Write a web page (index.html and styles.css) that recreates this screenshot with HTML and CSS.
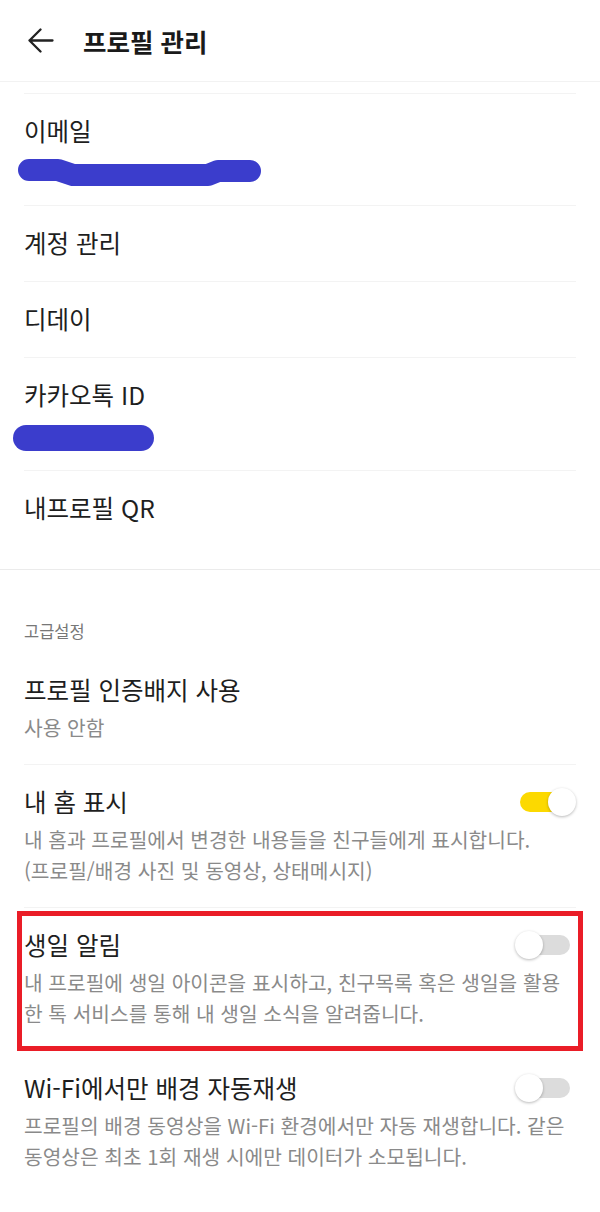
FILE: index.html
```html
<!DOCTYPE html>
<html lang="ko">
<head>
  <meta charset="utf-8">
  <title>프로필 관리</title>
  <link rel="stylesheet" href="styles.css">
</head>
<body>
  <header class="topbar">
    <svg class="back" width="26" height="26" viewBox="0 0 26 26">
      <path d="M1.5 12.5 H24.5 M12.5 1.5 L1.5 12.5 L12.5 23.5" fill="none" stroke="#222" stroke-width="2.3" stroke-linecap="round" stroke-linejoin="round"/>
    </svg>
    <h1 class="title">프로필 관리</h1>
  </header>

  <section class="group">
    <div class="row stub"></div>

    <div class="row">
      <div class="label">이메일</div>
      <svg class="redact email" width="262" height="30" viewBox="0 0 262 30">
        <polyline points="11,12 40,12 55,17 190,17 200,13 232,13" fill="none" stroke="#3b3dcc" stroke-width="22" stroke-linecap="round" stroke-linejoin="round"/>
      </svg>
    </div>

    <div class="row">
      <div class="label">계정 관리</div>
    </div>

    <div class="row">
      <div class="label">디데이</div>
    </div>

    <div class="row">
      <div class="label">카카오톡 ID</div>
      <svg class="redact kakao" width="142" height="26" viewBox="0 0 142 26">
        <line x1="13" y1="13" x2="128" y2="13" stroke="#3b3dcc" stroke-width="26" stroke-linecap="round"/>
      </svg>
    </div>

    <div class="row last">
      <div class="label">내프로필 QR</div>
    </div>
  </section>

  <section class="group advanced">
    <div class="group-title">고급설정</div>

    <div class="row has-sub">
      <div class="label">프로필 인증배지 사용</div>
      <div class="sub">사용 안함</div>
    </div>

    <div class="row has-sub">
      <div class="row-head">
        <div class="label">내 홈 표시</div>
        <div class="switch on"><span class="knob"></span></div>
      </div>
      <div class="sub">내 홈과 프로필에서 변경한 내용들을 친구들에게 표시합니다.<br>(프로필/배경 사진 및 동영상, 상태메시지)</div>
    </div>

    <div class="row has-sub marked">
      <div class="row-head">
        <div class="label">생일 알림</div>
        <div class="switch"><span class="knob"></span></div>
      </div>
      <div class="sub">내 프로필에 생일 아이콘을 표시하고, 친구목록 혹은 생일을 활용 한 톡 서비스를 통해 내 생일 소식을 알려줍니다.</div>
    </div>

    <div class="row has-sub last">
      <div class="row-head">
        <div class="label">Wi-Fi에서만 배경 자동재생</div>
        <div class="switch"><span class="knob"></span></div>
      </div>
      <div class="sub">프로필의 배경 동영상을 Wi-Fi 환경에서만 자동 재생합니다. 같은 동영상은 최초 1회 재생 시에만 데이터가 소모됩니다.</div>
    </div>
  </section>
</body>
</html>
```

FILE: styles.css
```css
body {
  margin: 0;
  background: #fff;
  font-family: "Noto Sans CJK KR", "Noto Sans", sans-serif;
  color: #1e1e1e;
}

.topbar {
  height: 81px;
  display: flex;
  align-items: center;
  border-bottom: 1px solid #f2f2f2;
}

.back {
  display: block;
  margin-left: 28px;
}

.title {
  margin: 0 0 0 29px;
  font-size: 25.5px;
  font-weight: 700;
  line-height: 30px;
  color: #1a1a1a;
}

.row {
  margin: 0 24px;
  padding: 22px 0 23px;
  border-bottom: 1px solid #f3f3f3;
}

.row.stub {
  padding: 0;
  height: 11px;
}

.row.has-sub {
  padding-bottom: 21px;
}

.row.last {
  border-bottom: none;
}

.label {
  font-size: 24.5px;
  line-height: 30px;
  color: #1e1e1e;
}

.sub {
  margin-top: 7px;
  font-size: 20.3px;
  line-height: 31px;
  color: #8a8a8a;
  word-break: keep-all;
}

.redact {
  display: block;
}

.redact.email {
  margin: 12px 0 -6px -6px;
}

.redact.kakao {
  margin: 15px 0 -4px -11px;
}

.group:first-of-type {
  border-bottom: 1px solid #ebebeb;
  padding-bottom: 23px;
}

.group-title {
  margin: 51px 0 12px 24px;
  font-size: 16.5px;
  line-height: 20px;
  color: #777;
}

.row-head {
  display: flex;
  align-items: center;
  justify-content: space-between;
  padding-right: 6px;
}

.switch {
  position: relative;
  width: 50px;
  height: 20px;
  border-radius: 10px;
  background: #dcdcdc;
}

.switch .knob {
  position: absolute;
  top: -4px;
  left: -5px;
  width: 28px;
  height: 28px;
  border-radius: 50%;
  background: #fff;
  box-shadow: 0 1px 3px rgba(0, 0, 0, 0.28);
}

.switch.on {
  background: #fcd900;
}

.switch.on .knob {
  left: auto;
  right: -6px;
}

.row.marked {
  position: relative;
}

/* red highlight frame drawn over the row */
.row.marked::after {
  content: "";
  position: absolute;
  left: -7px;
  right: -7px;
  top: 3px;
  bottom: -1px;
  border: 5px solid #ea1d27;
  pointer-events: none;
}
```
